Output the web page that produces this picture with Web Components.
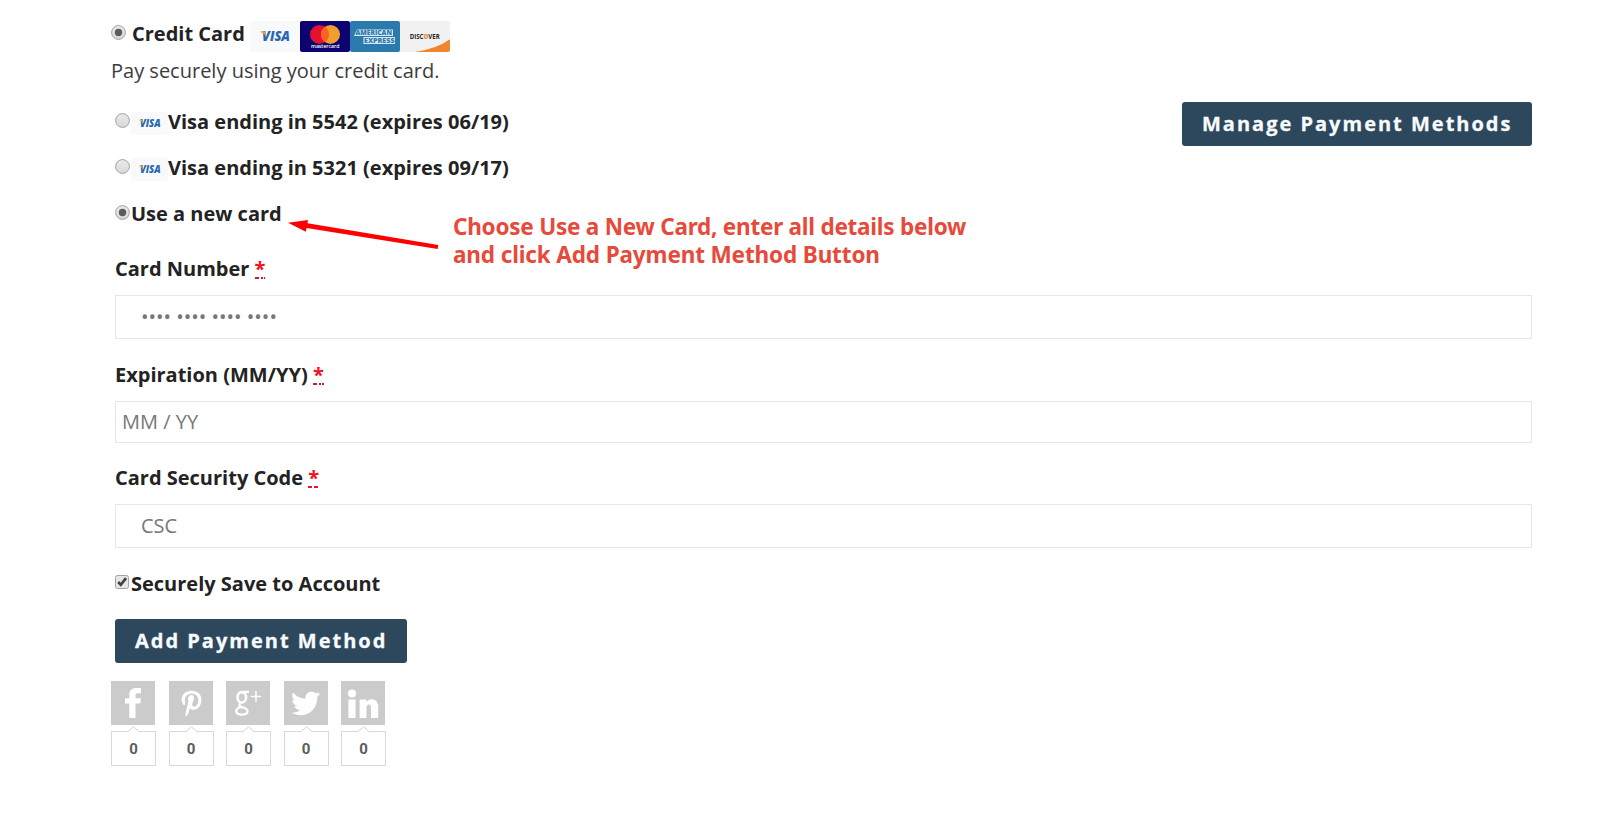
<!DOCTYPE html>
<html lang="en">
<head>
<meta charset="utf-8">
<title>Payment</title>
<style>
  body {
    margin: 0;
    background: #fff;
    color: #232323;
    font-family: "Open Sans", "Noto Sans", sans-serif;
    font-size: 20px;
  }
</style>
</head>
<body>
<payment-page></payment-page>

<script>
class BaseElement extends HTMLElement {
  constructor() {
    super();
    this.attachShadow({ mode: 'open' });
    const template = document.createElement('template');
    template.innerHTML = '<style>* { box-sizing: border-box; }</style>' + this.render();
    this.shadowRoot.appendChild(template.content.cloneNode(true));
  }
}

/* Radio button / checkbox with the older grey look */
customElements.define('choice-mark', class extends BaseElement {
  render() {
    return /*html*/`
      <style>
        :host { display: block; flex: none; width: 15px; height: 15px; }
        :host([type="checkbox"]) { width: 14px; height: 14px; }
        svg { display: none; width: 100%; height: 100%; }
        .radio, :host([type="checkbox"]) .check { display: block; }
        .dot, :host([type="checkbox"]) .radio { display: none; }
        :host([checked]) .dot { display: block; }
      </style>
      <svg class="radio" viewBox="0 0 15 15">
        <defs><linearGradient id="g" x2="0" y2="1"><stop stop-color="#e9e9e9"/><stop offset="1" stop-color="#d9d9d9"/></linearGradient></defs>
        <circle cx="7.5" cy="7.5" r="6.9" fill="url(#g)" stroke="#a2a2a2"/>
        <circle class="dot" cx="7.5" cy="7.5" r="3.7" fill="#5c5c5c"/>
      </svg>
      <svg class="check" viewBox="0 0 14 14">
        <rect x=".5" y=".5" width="13" height="13" rx="2" fill="#e6e6e6" stroke="#a2a2a2"/>
        <path d="M3.2 7l2.6 2.8L11 3.2" fill="none" stroke="#404040" stroke-width="2.7"/>
      </svg>
    `;
  }
});

customElements.define('card-logo', class extends BaseElement {
  render() {
    return /*html*/`
      <style>
        :host { display: block; flex: none; width: 50px; height: 31px; }
        :host([small]) { width: 37px; height: 23px; }
        svg { display: none; width: 100%; height: 100%; border-radius: 2px; }
        :host([brand="visa"]) .visa,
        :host([brand="mastercard"]) .mastercard,
        :host([brand="amex"]) .amex,
        :host([brand="discover"]) .discover { display: block; }
      </style>
      <svg class="visa" viewBox="0 0 50 31">
        <rect width="50" height="31" fill="#f8f9fb"/>
        <text x="12" y="20.2" font-family="Open Sans" font-weight="800" font-style="italic" font-size="13.5" fill="#2a66b1" textLength="28" lengthAdjust="spacingAndGlyphs">VISA</text>
        <path d="M10.5 10.3h3.6q1 0 1.2 1l1 4.6q-1.8-3.8-5.8-5z" fill="#e3a33b"/>
      </svg>
      <svg class="mastercard" viewBox="0 0 50 31">
        <rect width="50" height="31" fill="#0c0370"/>
        <circle cx="19.5" cy="13.4" r="9.5" fill="#e31230"/>
        <circle cx="30.5" cy="13.4" r="9.5" fill="#f09f2c"/>
        <path d="M25 5.6a9.5 9.5 0 0 1 0 15.6a9.5 9.5 0 0 1 0-15.6z" fill="#fb6320"/>
        <text x="11" y="27.3" font-family="Open Sans" font-weight="600" font-size="5.5" fill="#fff" textLength="28.5" lengthAdjust="spacingAndGlyphs">mastercard</text>
      </svg>
      <svg class="amex" viewBox="0 0 50 31">
        <rect width="50" height="31" fill="#2b7aad"/>
        <path d="M4 15l3-6.5h36v6.5zM13.5 16h31.5v7H13.5z" fill="#d5e8f3"/>
        <g font-family="Open Sans" font-weight="800" font-size="7" fill="#2b7aad">
          <text x="5.5" y="14.3" textLength="36.5" lengthAdjust="spacingAndGlyphs">AMERICAN</text>
          <text x="14" y="22.1" textLength="30.5" lengthAdjust="spacingAndGlyphs">EXPRESS</text>
        </g>
      </svg>
      <svg class="discover" viewBox="0 0 50 31">
        <rect width="50" height="31" fill="#f1f1f2"/>
        <path d="M50 18.2Q37 27.5 15 31h35z" fill="#ee8630"/>
        <text x="9.7" y="17.6" font-family="Open Sans" font-weight="700" font-size="6.8" fill="#252525" textLength="30" lengthAdjust="spacingAndGlyphs">DISC<tspan fill="#f08632" font-weight="800">O</tspan>VER</text>
      </svg>
    `;
  }
});

customElements.define('method-option', class extends BaseElement {
  render() {
    return /*html*/`
      <style>
        :host { display: flex; align-items: center; height: 46px; padding-top: 2px; line-height: 44px; font-weight: 700; white-space: nowrap; }
        ::slotted(choice-mark) { margin: 0 1px 3px 0; }
        ::slotted(card-logo) { margin-top: 2px; }
      </style>
      <slot></slot>
    `;
  }
});

customElements.define('action-button', class extends BaseElement {
  render() {
    return /*html*/`
      <style>
        :host { display: block; width: var(--button-width); height: 44px; }
        button {
          width: 100%;
          height: 100%;
          padding: 0 0 0 20px;
          border: 0;
          border-radius: 3px;
          background: #2d485d;
          color: #f8fbfd;
          font: 700 20px/44px "Open Sans", sans-serif;
          letter-spacing: 2px;
          text-align: left;
          white-space: nowrap;
          -webkit-text-stroke: .3px #f8fbfd;
        }
      </style>
      <button type="button"><slot></slot></button>
    `;
  }
});

customElements.define('form-field', class extends BaseElement {
  render() {
    return /*html*/`
      <style>
        :host { display: block; }
        label { display: block; height: 36px; margin-bottom: 9px; line-height: 38px; font-weight: 700; }
        abbr {
          display: inline-block;
          height: 29px;
          background: linear-gradient(90deg, #b8213d 4px, transparent 4px 6px, #b8213d 6px 8px, transparent 8px 9px, #b8213d 9px) bottom / 11px 2px no-repeat;
          color: #f3101f;
          vertical-align: top;
        }
        :host(.csc) abbr { background-image: linear-gradient(90deg, #f3101f 4px, transparent 4px 6px, #f3101f 6px 10px, transparent 10px); }
        .box {
          height: var(--field-height, 44px);
          padding-left: var(--field-indent, 25px);
          border: 1px solid #e6e6e6;
          color: #777;
          line-height: var(--field-line, 42px);
        }
      </style>
      <label><slot name="label"></slot> <abbr>*</abbr></label>
      <div class="box"><slot></slot></div>
    `;
  }
});

customElements.define('share-button', class extends BaseElement {
  render() {
    return /*html*/`
      <style>
        :host { display: block; width: 45px; }
        .icon { display: block; width: 44px; height: 44px; background: #cbcbcb; }
        .count { position: relative; height: 35px; margin-top: 6px; border: 1px solid #d9d9d9; color: #5c5c5c; font: 700 15px/34px Roboto, sans-serif; text-align: center; }
        .count svg { position: absolute; top: -6px; left: 15px; width: 13px; height: 7px; }
      </style>
      <div class="icon"><slot></slot></div>
      <div class="count">
        <svg viewBox="0 0 13 7"><path d="M.5 6L6.5.8l6 5.2v1H.5z" fill="#fff"/><path d="M.5 6L6.5.8l6 5.2" fill="none" stroke="#d3d3d3"/></svg>
        0
      </div>
    `;
  }
});

customElements.define('callout-note', class extends BaseElement {
  render() {
    return /*html*/`
      <style>
        :host { position: absolute; top: 210px; left: 286px; display: flex; color: #e64a3b; pointer-events: none; }
        svg { width: 168px; height: 44px; }
        .lines { margin: 3px 0 0 -1px; font: 700 22.5px/28px "Noto Sans", sans-serif; white-space: nowrap; }
        .first { letter-spacing: -.23px; }
        .second { letter-spacing: -.13px; }
      </style>
      <svg viewBox="0 0 168 44">
        <path d="M2 12.7L22 10l-.5 3.3L152.300 34.900l-.6 4L20.600 17.900l-.8 3.800z" fill="#fe0000"/>
      </svg>
      <div class="lines">
        <div class="first">Choose Use a New Card, enter all details below</div>
        <div class="second">and click Add Payment Method Button</div>
      </div>
    `;
  }
});

customElements.define('payment-page', class extends BaseElement {
  render() {
    return /*html*/`
      <style>
        :host { display: block; padding: 21px 80px 0 111px; }
        .head { display: flex; height: 31px; font-weight: 700; line-height: 26px; white-space: nowrap; }
        .head choice-mark { margin: 4px 6px 0 0; }
        .head .title { width: 118px; }
        .intro { margin: 5px 0 13px; color: #3c3c3c; font-weight: 400; line-height: 28px; }
        .form { padding-left: 4px; }
        .methods { display: flex; justify-content: space-between; margin-bottom: 14px; }
        .methods action-button { --button-width: 350px; margin-top: 4px; }
        .fields { display: grid; row-gap: 17px; }
        .date { --field-height: 42px; --field-indent: 6px; --field-line: 39px; margin-bottom: -1px; }
        .save { height: 36px; line-height: 34px; margin: 17px 0 18px; }
        .save choice-mark { margin: 0 2px 5px 0; }
        .add { --button-width: 292px; }
        .share { display: grid; grid-template-columns: repeat(5, 57.5px); margin-top: 18px; }
        .share svg { display: block; width: 44px; height: 44px; fill: #fff; }
      </style>
      <div class="head">
        <choice-mark checked></choice-mark><span class="title">Credit Card</span>
        <card-logo brand="visa"></card-logo><card-logo brand="mastercard"></card-logo><card-logo brand="amex"></card-logo><card-logo brand="discover"></card-logo>
      </div>
      <div class="intro">Pay securely using your credit card.</div>

      <div class="form">
        <div class="methods">
          <div>
            <method-option><choice-mark></choice-mark><card-logo brand="visa" small></card-logo>Visa ending in 5542 (expires 06/19)</method-option>
            <method-option><choice-mark></choice-mark><card-logo brand="visa" small></card-logo>Visa ending in 5321 (expires 09/17)</method-option>
            <method-option><choice-mark checked></choice-mark>Use a new card</method-option>
          </div>
          <action-button>Manage Payment Methods</action-button>
        </div>
        <div class="fields">
          <form-field><span slot="label">Card Number</span>•••• •••• •••• ••••</form-field>
          <form-field class="date"><span slot="label">Expiration (MM/YY)</span>MM / YY</form-field>
          <form-field class="csc"><span slot="label">Card Security Code</span>CSC</form-field>
        </div>
        <method-option class="save"><choice-mark type="checkbox"></choice-mark>Securely Save to Account</method-option>
        <action-button class="add">Add Payment Method</action-button>
      </div>

      <div class="share">
        <share-button><svg viewBox="0 0 44 44"><path d="M18.3 37V22.500H14v-5.300h4.300v-3.400c0-4.600 2.600-6.800 7-6.800H30v5.300h-3.200c-1.800 0-2.300.8-2.300 2.300v2.600H30l-.8 5.300h-4.700V37z"/></svg></share-button>
        <share-button><svg viewBox="0 0 44 44"><path d="M15.300 24.500c-5.400-5.600-2.200-14.800 7.400-14.800 6.200 0 9.700 3.800 9.700 8.800 0 6-3.400 10.300-8 10.300-1.800 0-3-.8-3.600-1.800-1 4-1.500 6.300-4 8.700-.7-3.200.4-6.200 2.700-15.700-1.200-3 .3-6 2.900-6 2.300 0 3 2 2.300 4.400-.7 2.600-1.800 4.300-1.300 5.800.4 1.200 1.400 1.800 2.600 1.400 2.500-.8 3.600-4.300 3.200-7.800-.8-6.800-11.900-7-13.300.1-.5 2.600.7 3.600.4 4.800z"/></svg></share-button>
        <share-button><svg viewBox="0 0 44 44" style="fill:none;stroke:#fff"><ellipse cx="15.800" cy="16.300" rx="4.300" ry="5.200" stroke-width="2.600"/><path d="M14 11.400l3-.6h6M15 21.500c-3 2-1.700 3.700.8 4.500 3.500 1 6 2 5.700 4.300-.3 4.400-11.500 4.300-11.300-.2.100-2.500 2.600-4 5.600-4" stroke-width="2.300"/><path d="M30 10v11M24.700 15.500h10.600" stroke-width="1.500"/></svg></share-button>
        <share-button><svg viewBox="0 0 44 44"><path d="M36.200 12.300c-1.100.4-2.200.7-3.300.8 1-.5 1.500-1.200 1.800-2-1.200.6-2.300.8-3.500.9-3.800-3.100-10.400-.5-9.600 5.600-5 0-9.400-2.400-12.600-6.200-1.500 2.800-.7 6.300 2 8.100-1 0-1.900-.3-2.700-.8 0 3 2 5.400 4.800 6.100-.8.200-1.700.2-2.600.1.800 2.400 2.800 4 5.500 4.200-2.400 2-5.300 2.800-8.500 2.500 11.400 7.100 26.300-.4 25.800-15.600 1.200-.9 2.200-2.200 2.900-3.700z"/></svg></share-button>
        <share-button><svg viewBox="0 0 44 44"><circle cx="11" cy="12.600" r="4"/><path d="M7.400 18.500h7.200V37H7.400zM18.600 18.500h6.600v2.600c3.300-4.500 12-4 12 4.700V37H30V27c0-4.800-4.500-4.400-4.500 0v10h-6.900z"/></svg></share-button>
      </div>
      <callout-note></callout-note>
    `;
  }
});
</script>
</body>
</html>
